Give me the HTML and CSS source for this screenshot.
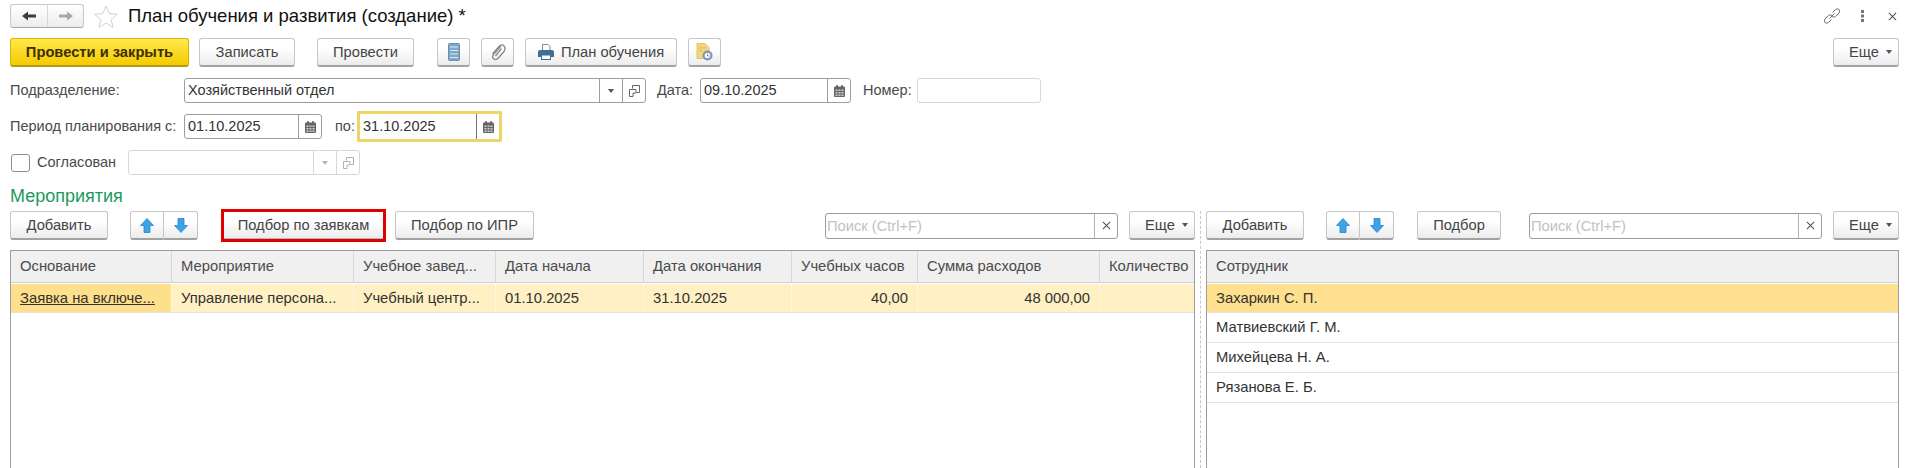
FILE: index.html
```html
<!DOCTYPE html>
<html lang="ru">
<head>
<meta charset="utf-8">
<title>План обучения и развития (создание)</title>
<link rel="stylesheet" href="styles.css">
</head>
<body>
<svg class="defs" width="0" height="0" aria-hidden="true">
  <symbol id="cal" viewBox="0 0 11 12">
    <path d="M1 1.500h9q1 0 1 1V11q0 1-1 1H1q-1 0-1-1V2.500q0-1 1-1z" fill="#666"/>
    <rect x="2" y="0" width="2" height="3" rx="1" fill="#666"/>
    <rect x="7" y="0" width="2" height="3" rx="1" fill="#666"/>
    <path d="M1.500 4.500h2V6h-2zM4.500 4.500h2V6h-2zM7.500 4.500h2V6h-2zM1.500 7h2v1.500h-2zM4.500 7h2v1.500h-2zM7.500 7h2v1.500h-2zM1.500 9.500h2V11h-2zM4.500 9.500h2V11h-2zM7.500 9.500h2V11h-2z" fill="#cfcfcf"/>
  </symbol>
  <symbol id="open" viewBox="0 0 11 12">
    <path d="M3.500 3.500V.5h7v7H7.500" fill="none" stroke="#666" stroke-width="1"/>
    <path d="M.5 4.500h6.500V8H4v3.500H.5z" fill="none" stroke="#666" stroke-width="1"/>
  </symbol>
  <symbol id="up" viewBox="0 0 14 15">
    <path d="M7 .5L13.500 7.500H10V14.500H4V7.500H.5z" fill="#3ba3e6" stroke="#2385c8" stroke-width="0.800"/>
  </symbol>
  <symbol id="down" viewBox="0 0 14 15">
    <path d="M7 14.500L13.500 7.500H10V.5H4V7.500H.5z" fill="#3ba3e6" stroke="#2385c8" stroke-width="0.800"/>
  </symbol>
  <symbol id="x" viewBox="0 0 10 10">
    <path d="M1 1L9 9M9 1L1 9" stroke="#555" stroke-width="1.200" fill="none"/>
  </symbol>
</svg>

<div class="page">
  <header class="titlebar">
    <div class="nav">
      <span class="nav-cell nav-back">
        <svg width="14" height="10" viewBox="0 0 14 10"><path d="M0 5L6 .5v3h8v3H6v3z" fill="#3d3d3d"/></svg>
      </span>
      <span class="nav-cell">
        <svg width="14" height="10" viewBox="0 0 14 10"><path d="M14 5L8 .5v3H0v3h8v3z" fill="#a8a8a8"/></svg>
      </span>
    </div>
    <svg class="star" width="24" height="23" viewBox="0 0 24 23"><path d="M12 1l3.200 7.600 8.200.6-6.300 5.300 2 8-7.100-4.300-7.100 4.300 2-8L.6 9.200l8.200-.6z" fill="#fff" stroke="#d2d2d2" stroke-width="1"/></svg>
    <h1 class="title">План обучения и развития (создание) *</h1>
    <div class="win-icons">
      <svg width="16" height="16" viewBox="0 0 16 16"><path d="M8.500 4.500L11.500 1.500q2-1.500 3.500 0t0 3.500L11.500 8.500q-2 1.500-3.500 0M7.500 11.500L4.500 14.500q-2 1.500-3.500 0t0-3.500L4.500 7.500q2-1.500 3.500 0M5.500 10.500L10.500 5.500" fill="none" stroke="#6a6a6a" stroke-width="1"/></svg>
      <svg class="dots" width="3" height="12" viewBox="0 0 3 12"><rect width="3" height="3" fill="#777"/><rect y="4.500" width="3" height="3" fill="#777"/><rect y="9" width="3" height="3" fill="#777"/></svg>
      <svg class="close" width="9" height="9"><use href="#x"/></svg>
    </div>
  </header>

  <div class="toolbar main-toolbar">
    <button class="btn btn-primary w-post-close">Провести и закрыть</button>
    <button class="btn w-write">Записать</button>
    <button class="btn w-post">Провести</button>
    <button class="btn w-icon ml-23">
      <svg width="12" height="18" viewBox="0 0 12 18"><rect x="0.500" y="0.500" width="11" height="17" rx="1" fill="#7ea8c9" stroke="#6d8ea8"/><path d="M2 4h8M2 7.500h8M2 11h8M2 14.500h8" stroke="#dce9f3" stroke-width="1.200"/></svg>
    </button>
    <button class="btn w-icon ml-11">
      <svg width="16" height="18" viewBox="0 0 16 18"><path d="M11 3L3.500 11.500q-2 3 .3 4.500t4.500-1L14 8.500q2-3 0-5.500t-5 .5L2.500 11M5.500 13L11.500 5.500" fill="none" stroke="#8c8c8c" stroke-width="1.400"/></svg>
    </button>
    <button class="btn w-plan ml-11">
      <svg class="btn-ico" width="16" height="16" viewBox="0 0 16 16"><path d="M4.500 .5h5.500l2 2v4H4.500z" fill="#fff" stroke="#7a8a98"/><path d="M0 8q0-2 2-2h12q2 0 2 2v5h-3v-2H3v2H0z" fill="#3f6f96"/><rect x="3.500" y="11" width="9" height="4.500" fill="#fff" stroke="#3f6f96"/></svg>
      План обучения
    </button>
    <button class="btn w-icon ml-11">
      <svg width="17" height="18" viewBox="0 0 17 18"><path d="M1 .5h8l4 4v11H1z" fill="#f2d77f" stroke="#e3c465"/><path d="M3 5h3M3 8h3M7 5h3" stroke="#d8b653"/><circle cx="11.500" cy="12.500" r="5" fill="#7f93bd"/><circle cx="11.500" cy="12.500" r="2.800" fill="#fff"/><path d="M11.500 10.500v2.500h2" fill="none" stroke="#7f93bd"/></svg>
    </button>
    <button class="btn btn-more w-more push">Еще <i class="caret"></i></button>
  </div>

  <div class="form-row row-dept">
    <label class="lbl w-lbl">Подразделение:</label>
    <div class="field w-dept">
      <span class="field-text">Хозяйственный отдел</span>
      <span class="field-btn"><i class="caret"></i></span>
      <span class="field-btn"><svg width="11" height="12"><use href="#open"/></svg></span>
    </div>
    <label class="lbl ml-11 w-date-lbl">Дата:</label>
    <div class="field w-date">
      <span class="field-text">09.10.2025</span>
      <span class="field-btn"><svg width="11" height="12"><use href="#cal"/></svg></span>
    </div>
    <label class="lbl ml-12 w-num-lbl">Номер:</label>
    <div class="field field-off w-num"></div>
  </div>

  <div class="form-row row-period">
    <label class="lbl w-lbl">Период планирования с:</label>
    <div class="field w-from">
      <span class="field-text">01.10.2025</span>
      <span class="field-btn"><svg width="11" height="12"><use href="#cal"/></svg></span>
    </div>
    <label class="lbl ml-13 w-to-lbl">по:</label>
    <div class="field field-focus w-to">
      <span class="field-text">31.10.2025</span>
      <span class="field-btn"><svg width="11" height="12"><use href="#cal"/></svg></span>
    </div>
  </div>

  <div class="form-row row-agreed">
    <span class="check"></span>
    <label class="lbl w-agreed-lbl">Согласован</label>
    <div class="field field-off w-agreed">
      <span class="field-text"></span>
      <span class="field-btn"><i class="caret caret-off"></i></span>
      <span class="field-btn"><svg class="faded" width="11" height="12"><use href="#open"/></svg></span>
    </div>
  </div>

  <h2 class="section">Мероприятия</h2>

  <div class="panels">
    <section class="panel panel-left">
      <div class="toolbar">
        <button class="btn w-add">Добавить</button>
        <div class="btn-group ml-22">
          <button class="btn btn-seg"><svg width="14" height="15"><use href="#up"/></svg></button>
          <button class="btn btn-seg"><svg width="14" height="15"><use href="#down"/></svg></button>
        </div>
        <div class="marked ml-23"><button class="btn w-pick">Подбор по заявкам</button></div>
        <button class="btn w-pick2 ml-9">Подбор по ИПР</button>
        <div class="search w-search push">
          <span class="search-text">Поиск (Ctrl+F)</span>
          <span class="search-x"><svg width="9" height="9"><use href="#x"/></svg></span>
        </div>
        <button class="btn btn-more w-more ml-11">Еще <i class="caret"></i></button>
      </div>
      <div class="grid">
        <div class="grid-row grid-head cols-main">
          <span>Основание</span><span>Мероприятие</span><span>Учебное завед...</span><span>Дата начала</span><span>Дата окончания</span><span>Учебных часов</span><span>Сумма расходов</span><span>Количество</span>
        </div>
        <div class="grid-row grid-line cols-main row-soft">
          <span class="cell-cur"><u>Заявка на включе...</u></span><span>Управление персона...</span><span>Учебный центр...</span><span>01.10.2025</span><span>31.10.2025</span><span class="num">40,00</span><span class="num">48 000,00</span><span></span>
        </div>
      </div>
    </section>
    <div class="splitter"></div>
    <section class="panel panel-right">
      <div class="toolbar">
        <button class="btn w-add">Добавить</button>
        <div class="btn-group ml-22">
          <button class="btn btn-seg"><svg width="14" height="15"><use href="#up"/></svg></button>
          <button class="btn btn-seg"><svg width="14" height="15"><use href="#down"/></svg></button>
        </div>
        <button class="btn w-pick3 ml-23">Подбор</button>
        <div class="search w-search push">
          <span class="search-text">Поиск (Ctrl+F)</span>
          <span class="search-x"><svg width="9" height="9"><use href="#x"/></svg></span>
        </div>
        <button class="btn btn-more w-more ml-11">Еще <i class="caret"></i></button>
      </div>
      <div class="grid">
        <div class="grid-row grid-head"><span>Сотрудник</span></div>
        <div class="grid-row grid-line row-cur"><span>Захаркин С. П.</span></div>
        <div class="grid-row grid-line"><span>Матвиевский Г. М.</span></div>
        <div class="grid-row grid-line"><span>Михейцева Н. А.</span></div>
        <div class="grid-row grid-line"><span>Рязанова Е. Б.</span></div>
      </div>
    </section>
  </div>
</div>
</body>
</html>
```
FILE: styles.css
```css
* { box-sizing: border-box; }
html, body { margin: 0; height: 468px; overflow: hidden; background: #fff; }
body { font: 14.700px/1 "Liberation Sans", Arial, sans-serif; color: #3c3c3c; }
.defs { position: absolute; }

.page { display: flex; flex-direction: column; height: 468px; padding: 4px 10px 0; }

/* title bar */
.titlebar { display: flex; align-items: center; height: 24px; }
.nav { display: flex; width: 74px; height: 24px; border: 1px solid #c8c8c8; border-bottom-color: #a8a8a8; border-radius: 3px; background: linear-gradient(#fff, #ececec); }
.nav-cell { flex: 1; display: flex; align-items: center; justify-content: center; }
.nav-back { border-right: 1px solid #d6d6d6; flex: 0 0 37px; }
.star { margin-left: 10px; }
.title { margin: 0 0 0 10px; font-size: 18.500px; font-weight: 400; color: #111; white-space: nowrap; }
.win-icons { display: flex; align-items: center; margin-left: auto; margin-right: 2px; }
.dots { margin-left: 21px; }
.close { margin-left: 24px; }

/* toolbars */
.toolbar { display: flex; align-items: center; height: 29px; }
.main-toolbar { margin-top: 10px; }
.push { margin-left: auto; }
.ml-9 { margin-left: 9px; }
.ml-11 { margin-left: 11px; }
.ml-12 { margin-left: 12px; }
.ml-13 { margin-left: 13px; }
.ml-22 { margin-left: 22px; }
.ml-23 { margin-left: 23px; }

.btn { display: inline-flex; align-items: center; justify-content: center; flex: none; height: 29px; padding: 0; font: inherit; color: #444; border: 1px solid #c6c6c6; border-bottom: 2px solid #a2a2a2; border-radius: 3px; background: linear-gradient(#fff 35%, #ececec); }
.btn-primary { font-weight: 700; color: #3a3000; border-color: #d8b400; border-bottom-color: #b79a10; background: linear-gradient(#ffe94c, #f6ca00); }
.marked { flex: none; display: flex; margin-top: -2px; margin-bottom: -2px; border: 3px solid #e00000; }
.marked .btn { height: 27px; border: 0; border-bottom: 1px solid #b5b5b5; border-radius: 0; }
.btn-ico { margin-right: 7px; }
.btn-group { display: flex; }
.btn-seg { width: 34px; border-radius: 0; }
.btn-seg:first-child { border-radius: 3px 0 0 3px; }
.btn-seg:last-child { border-radius: 0 3px 3px 0; border-left: 0; }

.w-post-close { width: 179px; }
.w-write { width: 96px; margin-left: 10px; }
.w-post { width: 97px; margin-left: 22px; }
.w-icon { width: 33px; }
.w-plan { width: 152px; }
.w-more { width: 66px; }
.btn-more { justify-content: flex-start; padding-left: 15px; }
.btn-more .caret { margin-left: 7px; }
.w-add { width: 98px; }
.w-pick { width: 159px; }
.w-pick2 { width: 139px; }
.w-pick3 { width: 84px; }
.w-search { width: 293px; }

.caret { display: inline-block; width: 0; height: 0; border: 3.500px solid transparent; border-top: 4px solid #555; border-bottom: 0; }
.caret-off { border-top-color: #b5b5b5; }
.faded { opacity: .5; }

/* form */
.form-row { display: flex; align-items: center; height: 25px; font-size: 14.500px; }
.row-dept { margin-top: 11px; }
.row-period { margin-top: 11px; }
.row-agreed { margin-top: 11px; }
.lbl { color: #4a4a4a; white-space: nowrap; }
.w-lbl { width: 174px; }
.w-date-lbl { width: 43px; }
.w-num-lbl { width: 54px; }
.w-to-lbl { width: 22px; }
.w-agreed-lbl { width: 91px; }

.field { display: flex; height: 25px; border: 1px solid #9d9d9d; border-radius: 3px; background: #fff; color: #333; }
.field-text { flex: 1; padding-left: 3px; line-height: 23px; white-space: nowrap; }
.field-btn { flex: none; display: flex; align-items: center; justify-content: center; width: 23px; border-left: 1px solid #9d9d9d; }
.field-off { border-color: #d8d8d8; }
.field-off .field-btn { border-left-color: #d8d8d8; }
.field-focus { height: 31px; margin: -3px 0; border: 3px solid #efd569; border-radius: 1px; }
.field-focus .field-text { line-height: 25px; }
.field-focus .field-btn { border-left-color: #777; }
.w-dept { width: 462px; }
.w-date { width: 151px; }
.w-num { width: 124px; }
.w-from { width: 138px; }
.w-to { width: 145px; }
.w-agreed { width: 232px; }
.check { flex: none; width: 19px; height: 18px; margin: 0 7px 0 1px; border: 1px solid #8e8e8e; border-radius: 3px; background: #fff; }

.section { margin: 14px 0 0; font-size: 18px; font-weight: 400; line-height: 15px; color: #1b9a5e; }

/* panels */
.panels { flex: 1; display: flex; margin-top: 7px; min-height: 0; }
.panel { display: flex; flex-direction: column; min-width: 0; }
.panel-left { flex: none; width: 1185px; }
.panel-right { flex: 1; }
.splitter { flex: none; width: 11px; margin-left: 5px; margin-right: -5px; border-left: 1px dashed #c8c8c8; }

.search { display: flex; height: 26px; border: 1px solid #9d9d9d; border-radius: 3px; background: #fff; }
.search-text { flex: 1; padding-left: 1px; line-height: 24px; color: #c2c2c2; }
.search-x { flex: none; display: flex; align-items: center; justify-content: center; width: 23px; border-left: 1px solid #b5b5b5; }

/* tables */
.grid { flex: 1; margin-top: 10px; border: 1px solid #9d9d9d; border-bottom: 0; font-size: 14.800px; }
.grid-row { display: grid; }
.cols-main { grid-template-columns: 161px 182px 142px 148px 148px 126px 182px 1fr; }
.grid-head { height: 32px; border-bottom: 1px solid #cfcfcf; background: #f0f0f0; color: #4b4b4b; }
.grid-head span { padding-left: 9px; line-height: 30px; border-right: 1px solid #d7d7d7; white-space: nowrap; overflow: hidden; }
.grid-head span:last-child { border-right: 0; }
.grid-line { height: 30px; border-bottom: 1px solid #e2e2e2; color: #333; }
.grid-head + .grid-line { border-top: 1px solid #fff; }
.grid-head + .grid-line span { line-height: 28px; }
.grid-line span { padding-left: 9px; line-height: 29px; white-space: nowrap; overflow: hidden; }
.row-soft span { background: #fff1c4; border-right: 1px solid #fff8df; }
.row-soft span:last-child { border-right: 0; }
.row-soft .cell-cur { background: #fedf8c; }
.row-soft .num { padding: 0 9px 0 0; text-align: right; }
.row-cur span { background: #fee08e; }
```
